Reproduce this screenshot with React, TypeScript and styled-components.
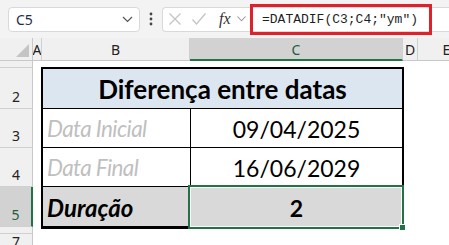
import React from "react";
import styled, { createGlobalStyle } from "styled-components";

const GlobalStyle = createGlobalStyle`
  html, body {
    margin: 0;
    padding: 0;
    background: #ffffff;
    overflow: hidden;
  }
  * {
    box-sizing: border-box;
  }
`;

const green = "#217346";
const uiFont = `"Noto Sans", "Liberation Sans", sans-serif`;
const cellFont = `Lato, "Liberation Sans", sans-serif`;

const Window = styled.div`
  width: 449px;
  height: 245px;
  display: flex;
  flex-direction: column;
  background: #ffffff;
  overflow: hidden;
`;

const Toolbar = styled.div`
  height: 38px;
  flex: 0 0 38px;
  display: flex;
  align-items: center;
  padding-left: 8px;
  background: #f3f3f3;
`;

const NameBox = styled.div`
  width: 132px;
  height: 25px;
  display: flex;
  align-items: center;
  justify-content: space-between;
  padding: 0 6px 0 7px;
  background: #ffffff;
  border: 1px solid #d9d9d9;
  border-radius: 4px;
  font-family: ${uiFont};
  font-size: 14px;
  color: #1f2d4d;
`;

const Dots = styled.div`
  width: 22px;
  display: flex;
  justify-content: center;
`;

const FormulaBar = styled.div`
  flex: 1;
  height: 25px;
  display: flex;
  align-items: center;
  background: #ffffff;
  border: 1px solid #d9d9d9;
  border-right: none;
  border-radius: 4px 0 0 4px;
`;

const IconGroup = styled.div`
  width: 89px;
  display: flex;
  align-items: center;
  padding-left: 5px;
  gap: 9px;
`;

const Fx = styled.span`
  font-family: "Liberation Serif", serif;
  font-style: italic;
  font-size: 16px;
  color: #333333;
  margin-left: 3px;
  margin-right: -3px;
`;

const FormulaInput = styled.div`
  position: relative;
  flex: 1;
  height: 100%;
  display: flex;
  align-items: center;
  padding-left: 10px;
  font-family: "Liberation Mono", "DejaVu Sans Mono", monospace;
  font-size: 13px;
  color: #1f1f1f;
`;

const Highlight = styled.div`
  position: absolute;
  left: -2px;
  top: -4px;
  width: 182px;
  height: 31px;
  border: 3px solid #e3202a;
`;

const Sheet = styled.div`
  flex: 1;
  display: grid;
  grid-template-columns: 33px 9px 148px 213px 15px 58px 1fr;
  grid-template-rows: 23px 7px 41px 39px 39px 40px 7px 1fr;
`;

const Corner = styled.div`
  background: #f0f0f0;
  border-right: 1px solid #c8c8c8;
  border-bottom: 1px solid #c8c8c8;
  display: flex;
  align-items: flex-end;
  justify-content: flex-end;
  padding: 0 3px 3px 0;
`;

const ColHead = styled.div<{ $active?: boolean }>`
  background: ${(p) => (p.$active ? "#d2d2d2" : "#f0f0f0")};
  border-right: 1px solid #d0d0d0;
  border-bottom: ${(p) => (p.$active ? `2px solid ${green}` : "1px solid #c8c8c8")};
  display: flex;
  align-items: center;
  justify-content: center;
  overflow: hidden;
  font-family: ${uiFont};
  font-size: 14px;
  color: ${(p) => (p.$active ? "#1e5e3a" : "#222222")};
  padding-top: 1px;
`;

const RowHead = styled.div<{ $active?: boolean }>`
  grid-column: 1;
  background: ${(p) => (p.$active ? "#d2d2d2" : "#f0f0f0")};
  border-right: ${(p) => (p.$active ? `2px solid ${green}` : "1px solid #c8c8c8")};
  border-bottom: 1px solid #d0d0d0;
  display: flex;
  align-items: flex-end;
  justify-content: center;
  overflow: hidden;
  padding-bottom: 3px;
  font-family: ${uiFont};
  font-size: 14px;
  line-height: 16px;
  color: ${(p) => (p.$active ? "#1e5e3a" : "#222222")};
`;

const Table = styled.div`
  grid-column: 3 / span 2;
  grid-row: 3 / span 4;
  margin: -1px -1px -2px -1px;
  display: grid;
  grid-template-columns: 147px 211px;
  grid-template-rows: 39px 38px 38px 39px;
  gap: 1px;
  background: #000000;
  border: 2px solid #000000;
  z-index: 1;
`;

const Cell = styled.div<{
  $bg?: string;
  $align?: "left" | "center";
  $span?: boolean;
}>`
  position: relative;
  grid-column: ${(p) => (p.$span ? "1 / span 2" : "auto")};
  background: ${(p) => p.$bg || "#ffffff"};
  display: flex;
  align-items: flex-end;
  justify-content: ${(p) => (p.$align === "center" ? "center" : "flex-start")};
  padding: 0 4px 4px 4px;
  font-family: ${cellFont};
  white-space: nowrap;
`;

const Title = styled.span`
  font-size: 26px;
  font-weight: 700;
  color: #000000;
  line-height: 28px;
  padding-bottom: 1px;
`;

const Label = styled.span<{ $strong?: boolean }>`
  font-size: ${(p) => (p.$strong ? "24px" : "22.5px")};
  font-style: italic;
  font-weight: ${(p) => (p.$strong ? 700 : 400)};
  letter-spacing: ${(p) => (p.$strong ? "0" : "-0.6px")};
  color: ${(p) => (p.$strong ? "#000000" : "#bfbfbf")};
  line-height: 28px;
`;

const Value = styled.span<{ $strong?: boolean }>`
  font-size: 23px;
  font-weight: ${(p) => (p.$strong ? 700 : 400)};
  color: #000000;
  line-height: 28px;
`;

const Selection = styled.div`
  position: absolute;
  top: -2px;
  left: -3px;
  right: -2px;
  bottom: -3px;
  border: 2px solid ${green};
  box-shadow: inset 0 0 0 1px #ffffff;
  pointer-events: none;
`;

const Handle = styled.div`
  position: absolute;
  right: -4px;
  bottom: -4px;
  width: 7px;
  height: 7px;
  background: ${green};
  border: 1px solid #ffffff;
`;

const Chevron = () => (
  <svg width="11" height="7" viewBox="0 0 11 7">
    <path d="M1 1 L5.5 5.5 L10 1" fill="none" stroke="#555" strokeWidth="1.2" />
  </svg>
);

export default function App() {
  const cols = [
    { name: "A", active: false },
    { name: "B", active: false },
    { name: "C", active: true },
    { name: "D", active: false },
    { name: "E", active: false },
    { name: "F", active: false },
  ];
  const rows = ["1", "2", "3", "4", "5", "6", "7"];

  return (
    <>
      <GlobalStyle />
      <Window>
        <Toolbar>
          <NameBox>
            <span>C5</span>
            <Chevron />
          </NameBox>
          <Dots>
            <svg width="4" height="14" viewBox="0 0 4 14">
              <circle cx="2" cy="2" r="1.4" fill="#444" />
              <circle cx="2" cy="7" r="1.4" fill="#444" />
              <circle cx="2" cy="12" r="1.4" fill="#444" />
            </svg>
          </Dots>
          <FormulaBar>
            <IconGroup>
              <svg width="14" height="14" viewBox="0 0 14 14">
                <path d="M1.5 1.5 L12.5 12.5 M12.5 1.5 L1.5 12.5" stroke="#c4c4c4" strokeWidth="1.3" />
              </svg>
              <svg width="16" height="14" viewBox="0 0 16 14">
                <path d="M1.5 7.5 L5.5 12 L14.5 1.5" fill="none" stroke="#c4c4c4" strokeWidth="1.3" />
              </svg>
              <Fx>fx</Fx>
              <svg width="9" height="6" viewBox="0 0 9 6">
                <path d="M0.5 0.5 L4.5 4.8 L8.5 0.5" fill="none" stroke="#999" strokeWidth="1.1" />
              </svg>
            </IconGroup>
            <FormulaInput>
              =DATADIF(C3;C4;"ym")
              <Highlight />
            </FormulaInput>
          </FormulaBar>
        </Toolbar>
        <Sheet>
          <Corner>
            <svg width="13" height="13" viewBox="0 0 13 13">
              <path d="M13 0 L13 13 L0 13 Z" fill="#c4c4c4" />
            </svg>
          </Corner>
          {cols.map((c) => (
            <ColHead key={c.name} $active={c.active}>
              {c.name}
            </ColHead>
          ))}
          {rows.map((r, i) => (
            <RowHead key={r} $active={r === "5"} style={{ gridRow: i + 2 }}>
              {r}
            </RowHead>
          ))}
          <Table>
            <Cell $bg="#dce6f1" $align="center" $span>
              <Title>Diferença entre datas</Title>
            </Cell>
            <Cell>
              <Label>Data Inicial</Label>
            </Cell>
            <Cell $align="center">
              <Value>09/04/2025</Value>
            </Cell>
            <Cell>
              <Label>Data Final</Label>
            </Cell>
            <Cell $align="center">
              <Value>16/06/2029</Value>
            </Cell>
            <Cell $bg="#d9d9d9">
              <Label $strong>Duração</Label>
            </Cell>
            <Cell $bg="#d9d9d9" $align="center">
              <Value $strong>2</Value>
              <Selection>
                <Handle />
              </Selection>
            </Cell>
          </Table>
        </Sheet>
      </Window>
    </>
  );
}
